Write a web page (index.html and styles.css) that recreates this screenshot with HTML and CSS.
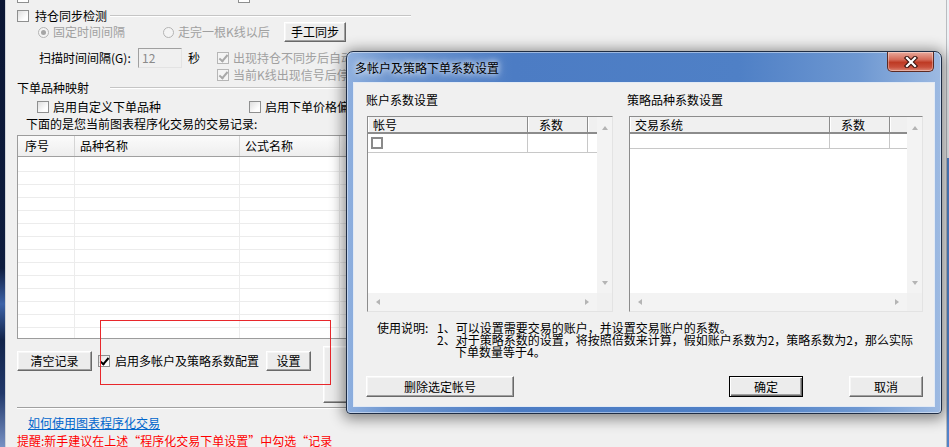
FILE: index.html
```html
<!DOCTYPE html>
<html lang="zh-CN">
<head>
    <meta charset="UTF-8">
    <title>程序化交易设置</title>
    <link rel="stylesheet" href="styles.css">
</head>
<body>
<div class="screen">
    <div class="desk-left"></div>

    <div class="win">
        <div class="stubs"><i class="stub"></i><i class="stub stub2"></i></div>

        <!-- 持仓同步 -->
        <div class="grp-head">
            <i class="cb"></i><span class="grp-title">持仓同步检测</span><span class="rule"></span>
        </div>
        <div class="row radios">
            <i class="rd on"></i><span class="dis-text lbl-a">固定时间间隔</span>
            <i class="rd"></i><span class="dis-text lbl-b">走完一根K线以后</span>
            <button class="btn sync">手工同步</button>
        </div>
        <div class="row scan">
            <span class="scan-lbl">扫描时间间隔(G):</span>
            <span class="input">12</span>
            <span class="sec">秒</span>
            <i class="cb on dis"></i><span class="dis-text">出现持仓不同步后自动</span>
        </div>
        <div class="row stop">
            <i class="cb on dis"></i><span class="dis-text">当前K线出现信号后停</span>
        </div>

        <!-- 下单品种映射 -->
        <div class="map-head"><span>下单品种映射</span><span class="rule"></span></div>
        <div class="row maps">
            <i class="cb"></i><span class="map-a">启用自定义下单品种</span>
            <i class="cb"></i><span>启用下单价格偏</span>
        </div>
        <div class="row note">下面的是您当前图表程序化交易的交易记录:</div>

        <div class="records">
            <div class="rec-head">
                <span class="h-no">序号</span>
                <span class="h-name">品种名称</span>
                <span class="h-formula">公式名称</span>
                <span class="h-more"></span>
            </div>
            <div class="rec-body"></div>
        </div>

        <div class="actions">
            <div class="row opts">
                <button class="btn clear">清空记录</button>
                <i class="cb on"></i><span class="multi">启用多帐户及策略系数配置</span>
                <button class="btn setup">设置</button>
            </div>
            <button class="btn big"></button>
        </div>
        <div class="sep"></div>
        <a class="help" href="#">如何使用图表程序化交易</a>
        <div class="warn">提醒:新手建议在上述“程序化交易下单设置”中勾选“记录</div>
    </div>

    <div class="desk-right"></div>

    <div class="mark"></div>

    <!-- 弹出窗口 -->
    <div class="dlg">
        <div class="dlg-title">
            <span class="dlg-name">多帐户及策略下单系数设置</span>
            <span class="close">
                <svg width="16" height="12" viewBox="0 0 16 12">
                    <path d="M4 2 L12 10 M12 2 L4 10" stroke="#3b1510" stroke-width="4.4" stroke-linecap="square"/>
                    <path d="M4 2 L12 10 M12 2 L4 10" stroke="#fff" stroke-width="2.2" stroke-linecap="square"/>
                </svg>
            </span>
        </div>
        <div class="dlg-body">
            <div class="panes">
                <div class="pane pane-acc">
                    <div class="pane-title">账户系数设置</div>
                    <div class="list">
                        <div class="lv">
                            <div class="lv-head"><span class="col-acc">帐号</span><span class="col-coef">系数</span><span class="col-fill"></span></div>
                            <div class="lv-row tall"><span class="col-acc"><i class="cb grid-cb"></i></span><span class="col-coef"></span><span class="col-fill"></span></div>
                        </div>
                        <div class="vscroll"><i class="arr up"></i><i class="arr down"></i></div>
                        <div class="hscroll"><i class="arr left"></i><i class="arr right"></i></div>
                        <div class="corner"></div>
                    </div>
                </div>
                <div class="pane pane-sys">
                    <div class="pane-title">策略品种系数设置</div>
                    <div class="list">
                        <div class="lv">
                            <div class="lv-head"><span class="col-sys">交易系统</span><span class="col-coef">系数</span><span class="col-fill"></span></div>
                            <div class="lv-row"><span class="col-sys"></span><span class="col-coef"></span><span class="col-fill"></span></div>
                        </div>
                        <div class="vscroll"><i class="arr up"></i><i class="arr down"></i></div>
                        <div class="hscroll"><i class="arr left"></i><i class="arr right"></i></div>
                        <div class="corner"></div>
                    </div>
                </div>
            </div>

            <div class="usage">
                <span class="usage-lbl">使用说明:</span>
                <div class="usage-text">
                    <div>1、可以设置需要交易的账户，并设置交易账户的系数。</div>
                    <div>2、对于策略系数的设置，将按照倍数来计算，假如账户系数为2，策略系数为2，那么实际</div>
                    <div class="indent">下单数量等于4。</div>
                </div>
            </div>

            <div class="dlg-btns">
                <button class="btn del">删除选定帐号</button>
                <button class="btn def ok">确定</button>
                <button class="btn cancel">取消</button>
            </div>
        </div>
    </div>
</div>
</body>
</html>
```

FILE: styles.css
```css
* {
    box-sizing: border-box;
}

body {
    margin: 0;
    background: #f0f0f0;
    font-family: "Noto Sans CJK SC", "Liberation Sans", sans-serif;
    font-size: 12px;
    line-height: 14px;
    color: #000;
    white-space: nowrap;
}

.screen {
    position: relative;
    display: flex;
    width: 949px;
    height: 447px;
    overflow: hidden;
}

.desk-left {
    width: 5px;
    background: linear-gradient(#0b1634 0, #0e1d3f 60%, #3d63a8 68%, #12244a 76%, #21386a 88%, #7791c4 100%);
}

.desk-right {
    width: 3px;
    border-left: 1px solid #b9bcc0;
    background: linear-gradient(#eef1f5 0, #eef1f5 158px, #5283c9 158px);
}

.win {
    flex: 1;
    overflow: hidden;
    border-left: 1px solid #cfd3d8;
    padding-left: 11px;
    background: #f0f0f0;
}

.row {
    display: flex;
    align-items: center;
}

/* checkbox / radio */
.cb {
    position: relative;
    flex: none;
    width: 12px;
    height: 12px;
    border: 1px solid #8e8f8f;
    background: linear-gradient(135deg, #dedede, #fdfdfd 70%);
}

.cb.on::after {
    content: "";
    position: absolute;
    left: 3px;
    top: 0;
    width: 3px;
    height: 7px;
    border: solid #000;
    border-width: 0 2px 2px 0;
    transform: rotate(40deg);
}

.cb.dis {
    border-color: #b6b6b6;
    background: #f4f4f4;
}

.cb.dis::after {
    border-color: #a8a8a8;
}

.rd {
    position: relative;
    flex: none;
    width: 11px;
    height: 11px;
    border: 1px solid #b4b4b4;
    border-radius: 50%;
    background: #f4f4f4;
}

.rd.on::after {
    content: "";
    position: absolute;
    left: 2px;
    top: 2px;
    width: 5px;
    height: 5px;
    border-radius: 50%;
    background: #a6a6a6;
}

.dis-text {
    color: #a0a0a0;
}

/* buttons */
.btn {
    display: flex;
    align-items: center;
    justify-content: center;
    flex: none;
    padding: 0;
    font: inherit;
    color: #000;
    background: #ececec;
    border: 1px solid;
    border-color: #fff #696969 #696969 #fff;
    box-shadow: inset -1px -1px #a0a0a0, inset 1px 1px #f6f6f6;
}

/* top part */
.stubs {
    display: flex;
    height: 3px;
}

.stub {
    width: 12px;
    height: 3px;
    border: 1px solid #8e8f8f;
    border-top: 0;
    background: #fff;
}

.stub2 {
    margin-left: 209px;
}

.grp-head {
    display: flex;
    align-items: center;
    width: 394px;
    height: 12px;
    margin-top: 7px;
}

.grp-title {
    margin-left: 6px;
}

.rule {
    flex: 1;
    height: 2px;
    margin-left: 3px;
    border-top: 1px solid #c5c5c5;
    border-bottom: 1px solid #fff;
}

.radios {
    height: 20px;
    padding-left: 21px;
}

.radios .rd + span {
    margin-left: 4px;
}

.lbl-a {
    width: 72px;
    margin-right: 38px;
}

.lbl-b {
    width: 90px;
    margin-right: 16px;
}

.sync {
    width: 62px;
    height: 20px;
}

.scan {
    height: 20px;
    margin-top: 6px;
    padding-left: 22px;
}

.scan-lbl {
    width: 99px;
}

.input {
    width: 44px;
    height: 20px;
    padding-left: 3px;
    border: 1px solid;
    border-color: #a0a0a0 #e3e3e3 #e3e3e3 #a0a0a0;
    color: #8a8a8a;
    line-height: 18px;
}

.sec {
    width: 12px;
    margin-left: 6px;
    margin-right: 17px;
}

.scan .cb + span,
.stop .cb + span {
    margin-left: 4px;
}

.stop {
    height: 13px;
    padding-left: 200px;
}

.map-head {
    display: flex;
    align-items: center;
    width: 880px;
    height: 14px;
}

.map-head .rule {
    margin-left: 21px;
}

.maps {
    height: 13px;
    margin-top: 5px;
    padding-left: 20px;
}

.maps .cb + span {
    margin-left: 4px;
}

.map-a {
    width: 108px;
    margin-right: 88px;
}

.note {
    height: 13px;
    margin-top: 4px;
    padding-left: 9px;
}

/* records table */
.records {
    width: 880px;
    height: 204px;
    margin-top: 5px;
    border: 1px solid #9c9c9c;
    background: #fff;
}

.rec-head {
    display: flex;
    height: 21px;
    border-bottom: 1px solid #a0a0a0;
    background: linear-gradient(#fbfbfb, #eeeeee);
    line-height: 20px;
}

.rec-head span {
    padding-left: 5px;
    border-right: 1px solid #d5d5d5;
}

.rec-head .h-no {
    width: 57px;
    padding-left: 7px;
}

.h-name {
    width: 165px;
}

.h-formula {
    width: 100px;
}

.h-more {
    flex: 1;
}

.rec-body {
    height: 181px;
    background:
        linear-gradient(to right, transparent 56px, #ececec 56px, #ececec 57px, transparent 57px,
            transparent 221px, #ececec 221px, #ececec 222px, transparent 222px,
            transparent 321px, #ececec 321px, #ececec 322px, transparent 322px),
        repeating-linear-gradient(#fff 0, #fff 12px, #ececec 12px, #ececec 13px);
    background-position: 0 0, 0 2px;
}

.actions {
    display: flex;
    align-items: flex-start;
    height: 57px;
    margin-top: 7px;
}

.opts {
    height: 20px;
    margin-top: 5px;
}

.clear {
    width: 75px;
    height: 20px;
}

.opts .cb {
    margin-left: 6px;
}

.multi {
    width: 144px;
    margin-left: 5px;
}

.setup {
    width: 45px;
    height: 20px;
    margin-left: 7px;
}

.big {
    width: 80px;
    height: 57px;
    margin-left: 12px;
}

.sep {
    width: 880px;
    height: 2px;
    margin-top: 4px;
    border-top: 1px solid #a0a0a0;
    border-bottom: 1px solid #fff;
}

.help {
    display: block;
    width: max-content;
    margin-top: 7px;
    margin-left: 11px;
    color: #0066cc;
    text-decoration: underline;
}

.warn {
    margin-top: 4px;
    color: #f00;
}

.mark {
    position: absolute;
    left: 100px;
    top: 320px;
    width: 231px;
    height: 65px;
    border: 1px solid #e8272b;
}

/* dialog window */
.dlg {
    position: absolute;
    left: 346px;
    top: 51px;
    width: 596px;
    height: 363px;
    display: flex;
    flex-direction: column;
    padding: 0 6px 6px;
    border: 1px solid #1f2d44;
    border-radius: 7px 7px 4px 4px;
    background: linear-gradient(to right, #8fb0df 0, #6f97d0 7%, #4c7cc4 28%, #4f80c6 66%, #6d97d1 86%, #9dbae2 100%);
    box-shadow: 0 2px 14px 3px rgba(0, 0, 0, 0.45), inset 0 0 0 1px rgba(255, 255, 255, 0.45);
}

.dlg-title {
    display: flex;
    height: 30px;
}

.dlg-name {
    align-self: center;
    margin-left: 2px;
    margin-top: 1px;
    text-shadow: 0 0 6px #fff, 0 0 10px rgba(255, 255, 255, 0.8);
}

.close {
    display: flex;
    align-items: center;
    justify-content: center;
    width: 47px;
    height: 20px;
    margin-left: auto;
    margin-right: 1px;
    border: 1px solid #5c2a23;
    border-top: 0;
    border-radius: 0 0 5px 5px;
    background: linear-gradient(#e9aa9c, #d46a58 40%, #be3a24 55%, #c9503c 80%, #dd8a78);
    box-shadow: inset 0 0 0 1px rgba(255, 255, 255, 0.35);
}

.dlg-body {
    flex: 1;
    border: 1px solid #e2eaf5;
    background: #f0f0f0;
}

.panes {
    display: flex;
    padding: 10px 0 0 13px;
}

.pane-acc {
    width: 246px;
}

.pane-sys {
    width: 294px;
    margin-left: 16px;
}

.pane-title {
    height: 14px;
    margin-left: -1px;
    margin-bottom: 9px;
}

.pane-sys .pane-title {
    margin-left: -2px;
}

.list {
    display: grid;
    grid-template-columns: 1fr 15px;
    grid-template-rows: 1fr 18px;
    height: 196px;
    border: 1px solid;
    border-color: #8c8c8c #e3e3e3 #e3e3e3 #8c8c8c;
    background: #fff;
}

.lv {
    overflow: hidden;
}

.lv-head {
    display: flex;
    height: 17px;
    border-bottom: 2px solid #8c8c8c;
    background: #f0f0f0;
    line-height: 15px;
}

.lv-head span {
    padding-left: 5px;
    border-right: 1px solid #8c8c8c;
    box-shadow: inset 1px 0 #fff;
}

.lv-head .col-coef {
    padding-left: 11px;
}

.col-acc {
    width: 160px;
}

.col-sys {
    width: 200px;
}

.col-coef {
    width: 60px;
}

.col-fill {
    flex: 1;
}

.lv-head .col-fill {
    border-right: 0;
}

.lv-row {
    display: flex;
    height: 15px;
    border-bottom: 1px solid #c8c8c8;
}

.lv-row.tall {
    height: 19px;
}

.lv-row span {
    display: flex;
    align-items: center;
    border-right: 1px solid #c8c8c8;
}

.lv-row .col-fill {
    border-right: 0;
}

.grid-cb {
    margin-left: 3px;
    border: 2px solid #8a8a8a;
    background: #fff;
}

.vscroll {
    display: flex;
    flex-direction: column;
    justify-content: space-between;
    align-items: center;
    padding: 9px 0 8px;
    background: #f3f3f3;
}

.hscroll {
    display: flex;
    justify-content: space-between;
    align-items: center;
    padding: 0 8px;
    background: #f3f3f3;
}

.corner {
    background: #f0f0f0;
}

.arr {
    width: 0;
    height: 0;
}

.arr.up {
    border-left: 3px solid transparent;
    border-right: 3px solid transparent;
    border-bottom: 4px solid #b4b4b4;
}

.arr.down {
    border-left: 3px solid transparent;
    border-right: 3px solid transparent;
    border-top: 4px solid #b4b4b4;
}

.arr.left {
    border-top: 3px solid transparent;
    border-bottom: 3px solid transparent;
    border-right: 4px solid #b4b4b4;
}

.arr.right {
    border-top: 3px solid transparent;
    border-bottom: 3px solid transparent;
    border-left: 4px solid #b4b4b4;
}

.usage {
    display: flex;
    margin-top: 10px;
    padding-left: 23px;
    line-height: 12px;
}

.usage-lbl {
    width: 60px;
}

.usage-text .indent {
    padding-left: 18px;
}

.dlg-btns {
    display: flex;
    margin-top: 18px;
    padding-left: 12px;
}

.dlg-btns .btn {
    height: 21px;
}

.del {
    width: 148px;
}

.ok {
    width: 74px;
    margin-left: 215px;
}

.cancel {
    width: 74px;
    margin-left: 46px;
}

.btn.def {
    border-color: #000;
    box-shadow: inset 1px 1px #fff, inset -1px -1px #696969, inset -2px -2px #a0a0a0;
}
```
